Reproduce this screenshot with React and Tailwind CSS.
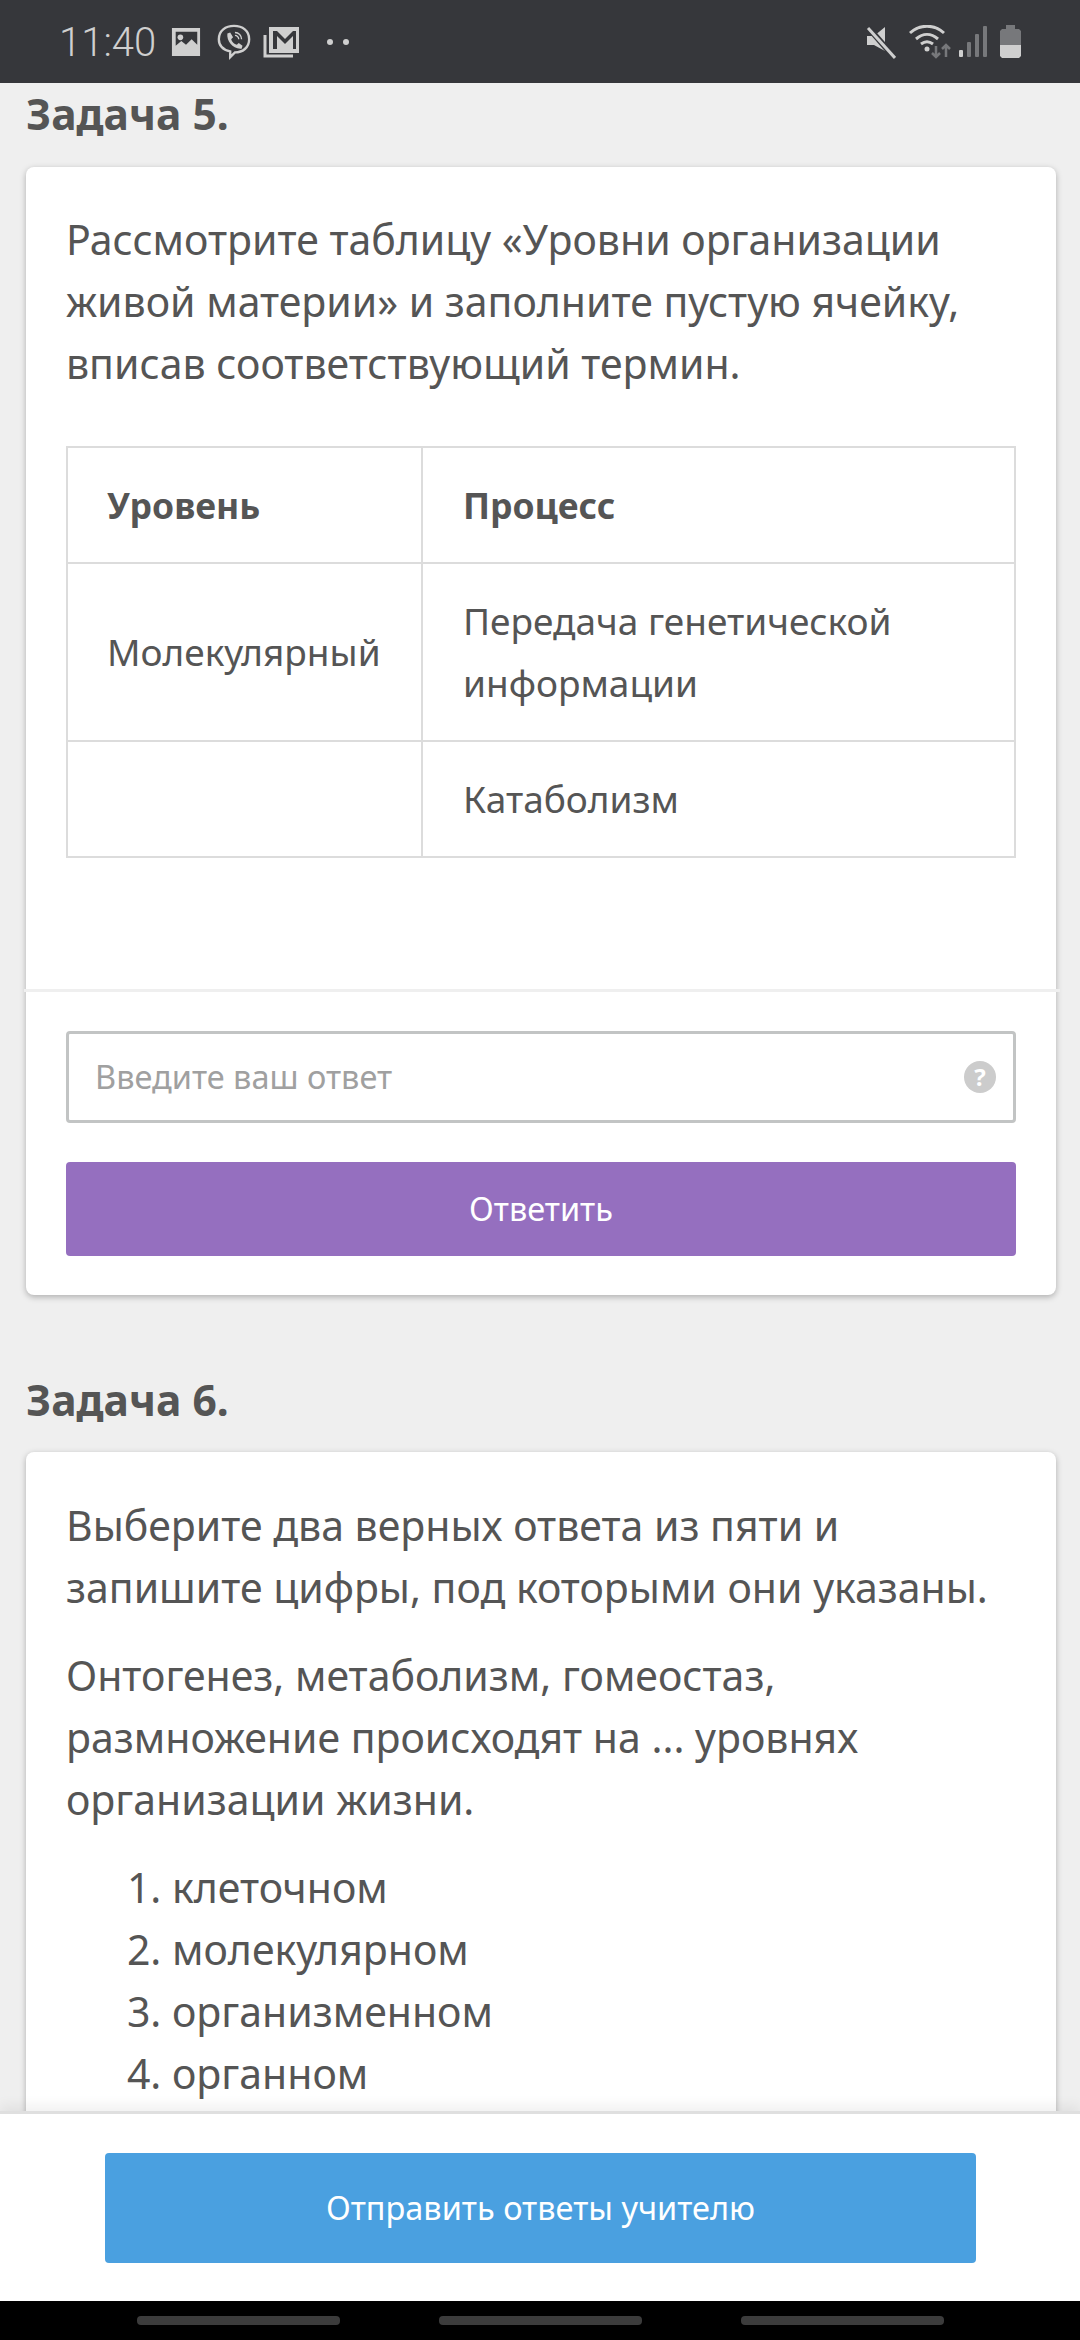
const font = { fontFamily: '"Noto Sans", sans-serif' };

function StatusBar() {
  return (
    <div className="h-[83px] bg-[#36373b] flex items-center pl-[59px] pr-[59px] shrink-0 text-[#cfcfcf]">
      <span className="text-[40px] font-['Roboto'] font-light leading-none mt-[2px] w-[98px]">11:40</span>
      <svg width="30" height="30" viewBox="0 0 32 32" className="ml-[14px]">
        <path fill="#cfcfcf" fillRule="evenodd" d="M1 1h30v30H1zM5 5v15l6-5 5 4 6-6 6 6V5z" />
        <circle cx="10" cy="11" r="3" fill="#cfcfcf" />
      </svg>
      <svg width="36" height="38" viewBox="0 0 38 38" className="ml-[15px]" fill="none" stroke="#cfcfcf">
        <path strokeWidth="2.5" d="M19 2c9 0 16 5 16 14 0 9-7 14-15 14l-5 5v-6C7 27 3 23 3 16 3 7 10 2 19 2z" />
        <path fill="#cfcfcf" stroke="none" d="M12 10l3-1 3 5-2 2c1 3 3 5 6 6l2-2 4 3-1 3c-9 1-16-8-15-16z" />
        <path strokeWidth="1.4" d="M20 9c4 0 7 3 7 7M20 12c2 0 4 2 4 4" />
      </svg>
      <svg width="36" height="32" viewBox="0 0 36 32" className="ml-[11px]">
        <path fill="none" stroke="#cfcfcf" strokeWidth="3" d="M2 9v21h28" />
        <path fill="#cfcfcf" fillRule="evenodd" d="M6 1h30v26H6zM10 5v18h4V10l8 8 8-8v13h3V5h-3l-8 8-8-8z" />
      </svg>
      <span className="ml-[28px] flex gap-[10px]">
        <span className="w-[6px] h-[6px] rounded-full bg-[#cfcfcf]" />
        <span className="w-[6px] h-[6px] rounded-full bg-[#cfcfcf]" />
      </span>
      <div className="ml-auto flex items-center">
        <svg width="30" height="34" viewBox="0 0 30 34">
          <path fill="#cfcfcf" d="M1 11h7l11-9v24L8 20H1z" />
          <path stroke="#36373b" strokeWidth="6" d="M0 0l28 32" />
          <path stroke="#cfcfcf" strokeWidth="3" d="M2 3l27 30" />
        </svg>
        <svg width="44" height="34" viewBox="0 0 44 34" className="ml-[13px]" fill="none" stroke="#cfcfcf" strokeWidth="3">
          <path d="M1 8c10-9 24-9 34 0M7 14c7-6 15-6 22 0M12 19c4-3 8-3 12 0" />
          <circle cx="18" cy="24" r="2.5" fill="#cfcfcf" stroke="none" />
          <path stroke="#77787b" strokeWidth="2.5" d="M27 21v11M23 28l4 4 4-4M37 32V20M33 24l4-4 4 4" />
        </svg>
        <svg width="28" height="32" viewBox="0 0 28 32" className="ml-[6px]">
          <rect x="0" y="24" width="4" height="7" rx="1" fill="#cfcfcf" />
          <rect x="8" y="16" width="4" height="15" rx="1" fill="#77787b" />
          <rect x="16" y="8" width="4" height="23" rx="1" fill="#77787b" />
          <rect x="24" y="0" width="4" height="31" rx="1" fill="#77787b" />
        </svg>
        <svg width="21" height="33" viewBox="0 0 21 33" className="ml-[13px]">
          <path fill="#77787b" d="M6 0h9v4h4l2 2v14H0V6l2-2h4z" />
          <path fill="#cfcfcf" d="M0 20h21v11l-2 2H2l-2-2z" />
        </svg>
      </div>
    </div>
  );
}

function Card({ children, className = "" }) {
  return (
    <div className={"ml-[26px] mr-[24px] bg-white rounded-[8px] shadow-[0_2px_6px_rgba(0,0,0,0.28)] " + className}>
      {children}
    </div>
  );
}

function Heading({ children, className = "" }) {
  return <h2 className={"px-[26px] text-[42.5px] leading-[48px] font-bold text-[#555555] " + className}>{children}</h2>;
}

export default function App() {
  return (
    <div style={font} className="w-[1080px] h-[2340px] flex flex-col overflow-hidden bg-[#efefef] text-[#555555]">
      <StatusBar />
      <div className="flex-1 min-h-0 overflow-hidden">
        <Heading className="mt-[7px]">Задача 5.</Heading>
        <Card className="mt-[29px] h-[1128px]">
          <div className="px-[40px] pt-[41px] h-[822px]">
            <p className="text-[41px] leading-[62px]">
              Рассмотрите таблицу «Уровни организации живой материи» и заполните пустую ячейку, вписав соответствующий термин.
            </p>
            <table className="mt-[52px] w-[950px] table-fixed border-collapse text-[37px] leading-[62px]">
              <tbody>
                <tr className="h-[116px]">
                  <td className="w-[355px] border-2 border-[#dcdcdc] pl-[39px] font-bold text-[35.5px]">Уровень</td>
                  <td className="border-2 border-[#dcdcdc] pl-[40px] font-bold text-[35.5px]">Процесс</td>
                </tr>
                <tr className="h-[178px]">
                  <td className="border-2 border-[#dcdcdc] pl-[39px]">Молекулярный</td>
                  <td className="border-2 border-[#dcdcdc] pl-[40px] pr-[20px]">Передача генетической информации</td>
                </tr>
                <tr className="h-[116px]">
                  <td className="border-2 border-[#dcdcdc]"></td>
                  <td className="border-2 border-[#dcdcdc] pl-[40px]">Катаболизм</td>
                </tr>
              </tbody>
            </table>
          </div>
          <div className="h-[3px] bg-[#efefef] -ml-[2px] -mr-[4px]" />
          <div className="px-[40px] pt-[39px]">
            <div className="h-[92px] border-[3px] border-[#c2c4c4] rounded-[4px] flex items-center pl-[26px] pr-[17px] text-[32.5px] text-[#a0a0a0]">
              <span>Введите ваш ответ</span>
              <span className="ml-auto w-[32px] h-[32px] rounded-full bg-[#cccccc] text-white text-[24px] font-bold flex items-center justify-center leading-none">?</span>
            </div>
            <button className="mt-[39px] w-full h-[94px] bg-[#956fbf] rounded-[4px] text-white text-[32.5px]">Ответить</button>
          </div>
        </Card>
        <Heading className="mt-[81px]">Задача 6.</Heading>
        <Card className="mt-[28px] h-[800px]">
          <div className="px-[40px] pt-[42px] text-[41px] leading-[62px]">
            <p>Выберите два верных ответа из пяти и запишите цифры, под которыми они указаны.</p>
            <p className="mt-[26px]">Онтогенез, метаболизм, гомеостаз, размножение происходят на ... уровнях организации жизни.</p>
            <ol className="mt-[26px] pl-[106px] list-decimal">
              <li>клеточном</li>
              <li>молекулярном</li>
              <li>организменном</li>
              <li>органном</li>
            </ol>
          </div>
        </Card>
      </div>
      <div className="h-[190px] shrink-0 bg-white border-t-[3px] border-[#dfdfdf] shadow-[0_-6px_12px_rgba(0,0,0,0.06)] relative pt-[39px] pl-[105px]">
        <button className="w-[871px] h-[110px] bg-[#4aa0e0] rounded-[4px] text-white text-[32.5px]">Отправить ответы учителю</button>
      </div>
      <div className="h-[39px] shrink-0 bg-black flex justify-center gap-[99px] pt-[15px]">
        <span className="w-[203px] h-[9px] rounded-[4px] bg-[#3c3c3c]" />
        <span className="w-[203px] h-[9px] rounded-[4px] bg-[#3c3c3c]" />
        <span className="w-[203px] h-[9px] rounded-[4px] bg-[#3c3c3c]" />
      </div>
    </div>
  );
}
